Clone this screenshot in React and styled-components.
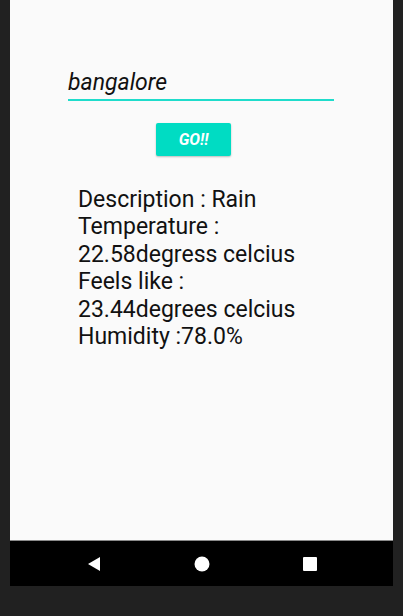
import React from "react";
import styled, { createGlobalStyle } from "styled-components";

const Global = createGlobalStyle`
  html, body { margin: 0; padding: 0; background: #212121; }
  body { width: 403px; height: 616px; overflow: hidden; font-family: Roboto, "Noto Sans", sans-serif; }
`;

const Frame = styled.div`
  width: 403px;
  height: 616px;
  background: #212121;
  padding: 0 10px;
  box-sizing: border-box;
  display: flex;
  flex-direction: column;
`;

const Screen = styled.div`
  height: 541px;
  background: #fafafa;
  border-bottom: 1px solid #8a8a8a;
  box-sizing: border-box;
  display: flex;
  flex-direction: column;
  padding: 68px 0 0 58px;
`;

const Input = styled.div`
  width: 266px;
  height: 33px;
  border-bottom: 2px solid #1fdccb;
  font-style: italic;
  font-size: 23px;
  color: #111;
  line-height: 30px;
  box-sizing: border-box;
`;

const Button = styled.button`
  margin: 22px 0 0 88px;
  width: 75px;
  height: 33px;
  border: none;
  border-radius: 2px;
  background: #00dcc3;
  box-shadow: 0 1px 2px rgba(0,0,0,0.25);
  color: #fff;
  font-family: Roboto, sans-serif;
  font-style: italic;
  font-weight: 700;
  font-size: 16px;
  padding: 0;
`;

const Info = styled.div`
  margin: 30px 0 0 10px;
  font-size: 23px;
  line-height: 27.4px;
  color: #111;
`;

const Line = styled.div``;

const NavBar = styled.div`
  height: 45px;
  background: #000;
  display: flex;
  align-items: center;
  justify-content: center;
  gap: 92px;
`;

const NavIcon = styled.svg`
  width: 16px;
  height: 16px;
  display: block;
`;

export default function App() {
  return (
    <>
      <Global />
      <Frame>
        <Screen>
          <Input>bangalore</Input>
          <Button>GO!!</Button>
          <Info>
            <Line>Description : Rain</Line>
            <Line>Temperature :</Line>
            <Line>22.58degress celcius</Line>
            <Line>Feels like :</Line>
            <Line>23.44degrees celcius</Line>
            <Line>Humidity :78.0%</Line>
          </Info>
        </Screen>
        <NavBar>
          <NavIcon viewBox="0 0 16 16"><polygon points="2,8 14,1 14,15" fill="#fff" /></NavIcon>
          <NavIcon viewBox="0 0 16 16"><circle cx="8" cy="8" r="7.5" fill="#fff" /></NavIcon>
          <NavIcon viewBox="0 0 16 16"><rect x="1" y="1" width="14" height="14" rx="1" fill="#fff" /></NavIcon>
        </NavBar>
      </Frame>
    </>
  );
}
